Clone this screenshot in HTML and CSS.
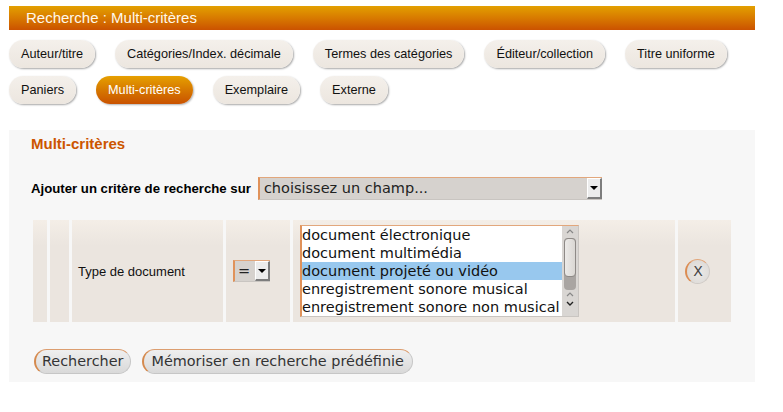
FILE: index.html
```html
<!DOCTYPE html>
<html lang="fr">
<head>
<meta charset="utf-8">
<title>Recherche : Multi-critères</title>
<link rel="stylesheet" href="styles.css">
</head>
<body>
<div class="page">
  <div class="header">Recherche : Multi-critères</div>
  <div class="tabs">
    <span class="tab">Auteur/titre</span>
    <span class="tab">Catégories/Index. décimale</span>
    <span class="tab">Termes des catégories</span>
    <span class="tab">Éditeur/collection</span>
    <span class="tab">Titre uniforme</span>
    <span class="tab">Paniers</span>
    <span class="tab active">Multi-critères</span>
    <span class="tab">Exemplaire</span>
    <span class="tab">Externe</span>
  </div>
  <div class="panel">
    <h3 class="panel-title">Multi-critères</h3>
    <div class="add-row">
      <span class="add-label">Ajouter un critère de recherche sur</span>
      <div class="select wide">
        <span class="select-value">choisissez un champ...</span>
        <span class="select-btn"><span class="arrow"></span></span>
      </div>
    </div>
    <div class="crit">
      <div class="cell"></div>
      <div class="cell"></div>
      <div class="cell label-cell">Type de document</div>
      <div class="cell op-cell">
        <div class="select small">
          <span class="select-value">=</span>
          <span class="select-btn"><span class="arrow"></span></span>
        </div>
      </div>
      <div class="cell list-cell">
        <div class="listbox">
          <div class="options">
            <div class="opt">document électronique</div>
            <div class="opt">document multimédia</div>
            <div class="opt sel">document projeté ou vidéo</div>
            <div class="opt">enregistrement sonore musical</div>
            <div class="opt">enregistrement sonore non musical</div>
          </div>
          <div class="scrollbar">
            <svg class="sb-arrow" width="10" height="12" viewBox="0 0 10 12"><path d="M2 7 L5 4 L8 7" fill="none" stroke="#888" stroke-width="1.2"/></svg>
            <div class="sb-track"><div class="sb-thumb"></div></div>
            <svg class="sb-arrow" width="10" height="9" viewBox="0 0 10 9"><path d="M2 6 L5 3 L8 6" fill="none" stroke="#888" stroke-width="1.2"/></svg>
            <svg class="sb-arrow" width="10" height="10" viewBox="0 0 10 10"><path d="M2 3 L5 6 L8 3" fill="none" stroke="#222" stroke-width="1.4"/></svg>
          </div>
        </div>
      </div>
      <div class="cell del-cell"><span class="del">X</span></div>
    </div>
    <div class="actions">
      <span class="btn">Rechercher</span>
      <span class="btn wide-btn">Mémoriser en recherche prédéfinie</span>
    </div>
  </div>
</div>
</body>
</html>
```
FILE: styles.css
```css
html, body { margin: 0; padding: 0; background: #ffffff; }
body { font-family: "Liberation Sans", Arial, sans-serif; color: #000; }
.page { width: 746px; margin: 6px 0 0 9px; }

.header {
  height: 24px;
  line-height: 24px;
  padding-left: 17px;
  font-size: 15px;
  color: #fff8ea;
  background: linear-gradient(to bottom, #e3a000 0%, #d87a00 50%, #cb5200 100%);
}

.tabs {
  display: flex;
  flex-wrap: wrap;
  column-gap: 20px;
  row-gap: 8px;
  margin-top: 10px;
}
.tab {
  height: 28px;
  line-height: 28px;
  padding: 0 12px;
  font-size: 12.7px;
  color: #111;
  border-radius: 14px;
  background: linear-gradient(to bottom, #f4f0eb, #ece6df);
  box-shadow: 1px 1px 2px rgba(0,0,0,0.35);
}
.tab.active {
  color: #fff;
  background: linear-gradient(to bottom, #e6a000 0%, #d67800 50%, #c95200 100%);
  box-shadow: 1px 1px 2px rgba(0,0,0,0.3);
}

.panel {
  margin-top: 26px;
  background: #f7f7f7;
  padding: 5px 0 8px 0;
  height: 239px;
}
.panel-title {
  margin: 0 0 0 22px;
  font-size: 15px;
  line-height: 17px;
  font-weight: bold;
  color: #cc5500;
}

.add-row {
  display: flex;
  align-items: center;
  margin: 25px 0 0 22px;
}
.add-label {
  font-size: 13.2px;
  font-weight: bold;
  margin-right: 7px;
}
.select {
  display: flex;
  background: #d6d2ce;
  border-top: 1px solid #e2a77c;
  border-left: 2px solid #e0925a;
  border-bottom: 1px solid #c9c5c1;
  font-family: "DejaVu Sans", sans-serif;
  font-size: 14.5px;
  color: #222;
  box-sizing: border-box;
}
.select.wide { width: 344px; height: 23px; }
.select.small { width: 37px; height: 22px; }
.select-value { flex: 1; padding-left: 4px; line-height: 21px; overflow: hidden; white-space: nowrap; }
.select.small .select-value { padding-left: 3px; }
.select-btn {
  width: 15px;
  flex: none;
  background: #ececec;
  border-top: 1px solid #fff;
  border-left: 1px solid #fff;
  border-right: 2px solid #7d7d7d;
  border-bottom: 2px solid #7d7d7d;
  display: flex;
  align-items: center;
  justify-content: center;
  box-sizing: border-box;
}
.arrow {
  width: 0; height: 0;
  border-left: 4px solid transparent;
  border-right: 4px solid transparent;
  border-top: 4px solid #000;
}

.crit {
  display: grid;
  grid-template-columns: 14px 19px 151px 64px 382px 53px;
  column-gap: 3px;
  height: 102px;
  margin: 20px 0 0 24px;
}
.cell {
  background: linear-gradient(to bottom, #f4eee7 0%, #ebe5df 25%, #ebe5df 100%);
  display: flex;
  align-items: center;
}
.label-cell { padding-left: 6px; font-size: 13px; color: #111; }
.op-cell { padding-left: 7px; }
.list-cell { padding-left: 7px; align-items: flex-start; padding-top: 5px; box-sizing: border-box; }
.del-cell { padding-left: 7px; }

.listbox {
  display: flex;
  width: 279px;
  height: 92px;
  background: #fff;
  border: 1px solid #c9c5c1;
  border-left: 2px solid #e0925a;
  border-top: 1px solid #e2a77c;
  box-sizing: border-box;
  overflow: hidden;
}
.options { flex: 1; overflow: hidden; }
.opt {
  font-family: "DejaVu Sans", sans-serif;
  font-size: 14.5px;
  line-height: 18px;
  height: 18px;
  white-space: nowrap;
  color: #111;
}
.opt.sel { background: #98c8ee; }
.scrollbar {
  width: 16px;
  flex: none;
  background: #d9d6d3;
  display: flex;
  flex-direction: column;
  align-items: center;
}
.sb-arrow { display: block; flex: none; }
.sb-track {
  width: 12px;
  height: 52px;
  background: #a9a5a2;
  border-radius: 4px;
  flex: none;
}
.sb-thumb {
  width: 12px;
  height: 39px;
  background: linear-gradient(to right, #eceae8, #dad7d3);
  border: 1px solid #8e8a87;
  border-radius: 4px;
  box-sizing: border-box;
}

.del {
  width: 25px;
  height: 25px;
  border-radius: 50%;
  background: radial-gradient(circle at 55% 55%, #ebe9e7 0%, #dedbd8 70%, #d2cecb 100%);
  border: 1px solid #cfcac6;
  border-left: 2px solid #dc8c52;
  border-top: 1px solid #e2a77c;
  box-sizing: border-box;
  font-family: "DejaVu Sans", sans-serif;
  font-size: 14px;
  color: #444;
  display: flex;
  align-items: center;
  justify-content: center;
}

.actions {
  display: flex;
  gap: 11px;
  margin: 27px 0 0 25px;
}
.btn {
  height: 25px;
  line-height: 23px;
  padding: 0 6px;
  box-sizing: border-box;
  border-radius: 13px;
  font-family: "DejaVu Sans", sans-serif;
  font-size: 14.4px;
  color: #333;
  background: linear-gradient(to bottom, #efefef, #d9d9d9);
  border: 1px solid #c6c6c6;
  border-left: 2px solid #d58a4e;
  border-top: 1px solid #dc9e70;
}
.btn.wide-btn { padding: 0 8px; }
```
